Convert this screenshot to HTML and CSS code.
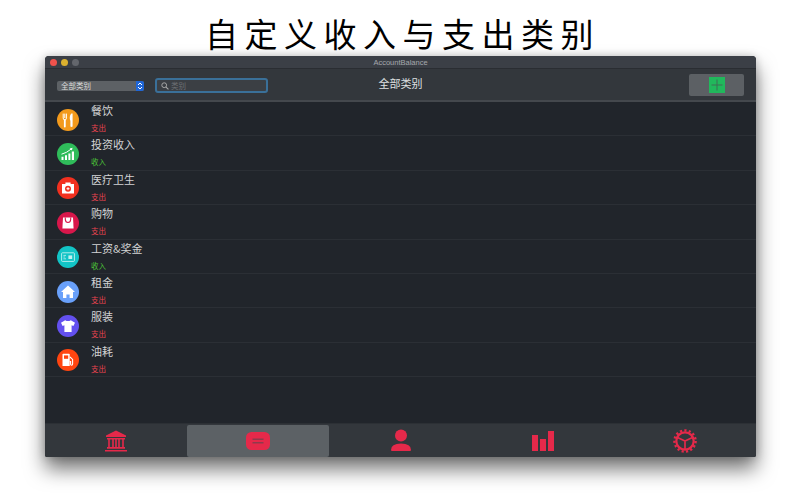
FILE: index.html
```html
<!DOCTYPE html>
<html lang="zh-CN">
<head>
  <meta charset="UTF-8">
  <title>AccountBalance</title>
  <link rel="stylesheet" href="styles.css">
</head>
<body>
  <h1 class="headline">自定义收入与支出类别</h1>
  <div class="window">
    <div class="titlebar">
      <div class="lights">
        <span class="light red"></span>
        <span class="light yellow"></span>
        <span class="light grey"></span>
      </div>
      <div class="window-title">AccountBalance</div>
    </div>
    <div class="toolbar">
      <div class="select">
        <span class="select-text">全部类别</span>
        <span class="select-arrows">
          <svg viewBox="0 0 8 10" width="8" height="10"><path d="M2 4 L4 2 L6 4 M2 6 L4 8 L6 6" fill="none" stroke="#fff" stroke-width="1"/></svg>
        </span>
      </div>
      <div class="search">
        <svg viewBox="0 0 10 10" width="8" height="8"><circle cx="4" cy="4" r="3" fill="none" stroke="#aaa" stroke-width="1.2"/><path d="M6.3 6.3 L9.3 9.3" stroke="#aaa" stroke-width="1.3"/></svg>
        <span class="search-text">类别</span>
      </div>
      <div class="toolbar-title">全部类别</div>
      <div class="add-button">
        <div class="add-green">
          <svg viewBox="0 0 16 16" width="16" height="16"><path d="M8 2.5 V13.5 M2.5 8 H13.5" stroke="#3f6f55" stroke-width="1"/></svg>
        </div>
      </div>
    </div>

    <div class="list">
      <div class="row">
        <div class="icon orange">
          <svg viewBox="0 0 22 22" width="22" height="22"><path d="M6.2 4.6 V9 M7.8 4.6 V9 M9.4 4.6 V9 M6.2 9 Q6.2 11 7.8 11 Q9.4 11 9.4 9" fill="none" stroke="#fff" stroke-width="1"/><path d="M7.8 11 V17.5" stroke="#fff" stroke-width="1.8" stroke-linecap="round"/><path d="M14.4 4.6 C12.6 6 12.4 10 13.4 11.8 L13.4 17.5 Q14.6 18.3 15.6 17.5 L15.6 4.6 Z" fill="#fff"/></svg>
        </div>
        <div class="info"><div class="name">餐饮</div><div class="kind out">支出</div></div>
      </div>
      <div class="row">
        <div class="icon green">
          <svg viewBox="0 0 22 22" width="22" height="22"><path d="M4.5 13.8 h2 v3.2 h-2 z M8 12.3 h2 v4.7 h-2 z M11.4 10.6 h2 v6.4 h-2 z M14.8 8.6 h2.2 v8.4 h-2.2 z" fill="#fff"/><path d="M4.5 11.2 Q9.5 10 14 6.2" fill="none" stroke="#fff" stroke-width="1"/><path d="M12.6 5.4 L15.6 4.8 L14.8 7.6 Z" fill="#fff"/></svg>
        </div>
        <div class="info"><div class="name">投资收入</div><div class="kind in">收入</div></div>
      </div>
      <div class="row">
        <div class="icon red-icon">
          <svg viewBox="0 0 22 22" width="22" height="22"><path d="M8.4 7 V5.6 H13.6 V7 H17 V16.5 H5 V7 Z" fill="#fff"/><circle cx="11" cy="11.7" r="3" fill="#f2301f"/><path d="M11 10.2 V13.2 M9.5 11.7 H12.5" stroke="#fff" stroke-width="1"/></svg>
        </div>
        <div class="info"><div class="name">医疗卫生</div><div class="kind out">支出</div></div>
      </div>
      <div class="row">
        <div class="icon crimson">
          <svg viewBox="0 0 22 22" width="22" height="22"><path d="M6 5.5 H16 L16.6 16.5 H5.4 Z" fill="#fff"/><path d="M8.3 5.5 V7.5 Q8.5 10.5 11 10.5 Q13.5 10.5 13.7 7.5 V5.5" fill="none" stroke="#d8174b" stroke-width="1.1"/></svg>
        </div>
        <div class="info"><div class="name">购物</div><div class="kind out">支出</div></div>
      </div>
      <div class="row">
        <div class="icon teal">
          <svg viewBox="0 0 22 22" width="22" height="22"><rect x="4.6" y="6.8" width="12.8" height="8.6" rx="0.8" fill="none" stroke="#c4eff0" stroke-width="0.9"/><path d="M6.4 9.4 h2.6 M6.4 11 h1.8 M6.4 12.8 h2.6" stroke="#c4eff0" stroke-width="0.8"/><rect x="11.4" y="9.4" width="3.8" height="3.6" fill="#c4eff0"/></svg>
        </div>
        <div class="info"><div class="name">工资&amp;奖金</div><div class="kind in">收入</div></div>
      </div>
      <div class="row">
        <div class="icon blue">
          <svg viewBox="0 0 22 22" width="22" height="22"><path d="M11 4.6 L18 11 H16 V17 H12.6 V13.4 H9.4 V17 H6 V11 H4 Z" fill="#fff"/></svg>
        </div>
        <div class="info"><div class="name">租金</div><div class="kind out">支出</div></div>
      </div>
      <div class="row">
        <div class="icon purple">
          <svg viewBox="0 0 22 22" width="22" height="22"><path d="M8.2 5.2 Q11 7 13.8 5.2 L18 7.8 L16.4 11 L14.6 10.2 V17 H7.4 V10.2 L5.6 11 L4 7.8 Z" fill="#fff"/></svg>
        </div>
        <div class="info"><div class="name">服装</div><div class="kind out">支出</div></div>
      </div>
      <div class="row">
        <div class="icon fuel">
          <svg viewBox="0 0 22 22" width="22" height="22"><path d="M5.5 5.5 Q5.5 4.8 6.2 4.8 H12 Q12.7 4.8 12.7 5.5 V17 H5.5 Z" fill="#fff"/><rect x="7" y="6.4" width="4.2" height="3.4" fill="#ff4510"/><path d="M13 8 L15.6 10.4 V15 Q15.6 16.2 14.6 16.2 Q13.6 16.2 13.6 15 V12.6 H12.7" fill="none" stroke="#fff" stroke-width="1.1"/></svg>
        </div>
        <div class="info"><div class="name">油耗</div><div class="kind out">支出</div></div>
      </div>
    </div>

    <div class="tabbar">
      <div class="tab">
        <svg viewBox="0 0 24 24" width="24" height="24"><path d="M12 1.5 L22 6.5 V8 H2 V6.5 Z" fill="#e5294a"/><path d="M3 9 H21 V10.5 H3 Z M3 18 H21 V19.7 H3 Z M1 21 H23 V22.6 H1 Z" fill="#e5294a"/><path d="M5 10 V18 M9 10 V18 M12 10 V18 M15 10 V18 M19 10 V18" stroke="#e5294a" stroke-width="1.6"/></svg>
      </div>
      <div class="tab active">
        <svg viewBox="0 0 24 24" width="24" height="24"><rect x="0" y="3" width="24" height="18" rx="5.5" fill="#e5294a"/><path d="M6.5 10.2 H17.5 M6.5 13.8 H17.5" stroke="#8f3a4c" stroke-width="1.4"/></svg>
      </div>
      <div class="tab">
        <svg viewBox="0 0 24 24" width="24" height="24"><circle cx="12" cy="6.5" r="6" fill="#e5294a"/><path d="M2 21 Q2 14.5 12 14.5 Q22 14.5 22 21 Q22 22 21 22 H3 Q2 22 2 21 Z" fill="#e5294a"/></svg>
      </div>
      <div class="tab">
        <svg viewBox="0 0 24 24" width="24" height="24"><path d="M1 6 H7 V22 H1 Z M9 10 H15 V22 H9 Z M17 2 H23 V22 H17 Z" fill="#e5294a"/></svg>
      </div>
      <div class="tab">
        <svg viewBox="0 0 24 24" width="24" height="24"><circle cx="12" cy="12" r="8.7" fill="none" stroke="#e5294a" stroke-width="2.2"/><circle cx="12" cy="12" r="10.6" fill="none" stroke="#e5294a" stroke-width="2.4" stroke-dasharray="2.2 2.25"/><path d="M12 12 L12 20 M12 12 L4.5 8.5 M12 12 L19.5 8.5" stroke="#e5294a" stroke-width="1.7"/></svg>
      </div>
    </div>
  </div>
</body>
</html>
```

FILE: styles.css
```css
html, body {
  margin: 0;
  padding: 0;
  height: 500px;
  overflow: hidden;
  background: #fff;
}
body {
  font-family: "Noto Sans CJK SC", "Liberation Sans", sans-serif;
}
.headline {
  margin: 0;
  height: 56px;
  padding-left: 5px;
  line-height: 66px;
  font-size: 33px;
  font-weight: 400;
  letter-spacing: 6.5px;
  text-align: center;
  color: #000;
}
.window {
  margin-left: 45px;
  width: 711px;
  height: 401px;
  display: flex;
  flex-direction: column;
  border-radius: 4px 4px 2px 2px;
  overflow: hidden;
  background: #21252b;
  box-shadow: 0 12px 20px rgba(0, 0, 0, 0.55), 0 0 8px rgba(0, 0, 0, 0.2);
}
.titlebar {
  height: 12px;
  flex-shrink: 0;
  display: flex;
  align-items: center;
  position: relative;
  background: #3b3f46;
}
.lights {
  display: flex;
  gap: 4px;
  padding-left: 5px;
}
.light {
  width: 7px;
  height: 7px;
  border-radius: 50%;
}
.light.red { background: #f0524c; }
.light.yellow { background: #dcb12f; }
.light.grey { background: #63666c; }
.window-title {
  position: absolute;
  left: 0;
  right: 0;
  text-align: center;
  font-family: "Liberation Sans", sans-serif;
  font-size: 7.5px;
  color: #a5a8ad;
}
.toolbar {
  height: 34px;
  flex-shrink: 0;
  box-sizing: border-box;
  display: flex;
  align-items: center;
  position: relative;
  padding: 0 12px;
  background: #33373c;
  border-top: 1px solid #2a2d32;
  border-bottom: 2px solid #44484d;
}
.select {
  width: 87px;
  height: 10px;
  display: flex;
  align-items: center;
  margin-top: 3px;
  border-radius: 2px;
  overflow: hidden;
  background: #5d6165;
}
.select-text {
  flex: 1;
  padding-left: 4px;
  font-size: 7.5px;
  line-height: 10px;
  color: #dcdcdc;
}
.select-arrows {
  width: 8px;
  height: 10px;
  display: flex;
  background: #1f66d6;
}
.search {
  width: 113px;
  height: 15px;
  box-sizing: border-box;
  display: flex;
  align-items: center;
  gap: 2px;
  margin-left: 11px;
  margin-top: 2px;
  padding-left: 4px;
  border: 2px solid #3a7099;
  border-radius: 3px;
  background: #3b3f44;
}
.search-text {
  font-size: 7.5px;
  line-height: 10px;
  color: #6d7074;
}
.toolbar-title {
  position: absolute;
  left: 0;
  right: 0;
  top: 5px;
  text-align: center;
  font-size: 11px;
  line-height: 18px;
  color: #dfe0e1;
}
.add-button {
  width: 55px;
  height: 22px;
  display: flex;
  align-items: center;
  justify-content: center;
  margin-left: auto;
  border-radius: 2px;
  background: #5c6064;
}
.add-green {
  width: 16px;
  height: 16px;
  display: flex;
  background: #21b85c;
}
.list {
  flex: 1;
  background: #21252b;
}
.row {
  height: 34.4px;
  box-sizing: border-box;
  display: flex;
  align-items: center;
  padding-left: 12px;
  border-bottom: 1px solid #2b2f35;
}
.icon {
  width: 22px;
  height: 22px;
  flex-shrink: 0;
  display: flex;
  margin-top: 2px;
  border-radius: 50%;
}
.icon.orange { background: #f39a1c; }
.icon.green { background: #2fbc5a; }
.icon.red-icon { background: #f2301f; }
.icon.crimson { background: #d8174b; }
.icon.teal { background: #12c4c6; }
.icon.blue { background: #69a0fa; }
.icon.purple { background: #6350ef; }
.icon.fuel { background: #ff4510; }
.info {
  margin-left: 12px;
  display: flex;
  flex-direction: column;
  height: 100%;
}
.name {
  font-size: 11px;
  line-height: 17px;
  color: #d2d3d4;
}
.kind {
  margin-top: 3px;
  font-size: 7.5px;
  line-height: 12px;
}
.kind.out { color: #ec4450; }
.kind.in { color: #4cc238; }
.tabbar {
  height: 34px;
  flex-shrink: 0;
  box-sizing: border-box;
  display: flex;
  padding-top: 1px;
  background: #33373c;
  border-top: 1px solid #2c3035;
}
.tab {
  flex: 1;
  display: flex;
  align-items: center;
  justify-content: center;
  border-radius: 2px;
}
.tab.active {
  background: #5c6165;
}
```
